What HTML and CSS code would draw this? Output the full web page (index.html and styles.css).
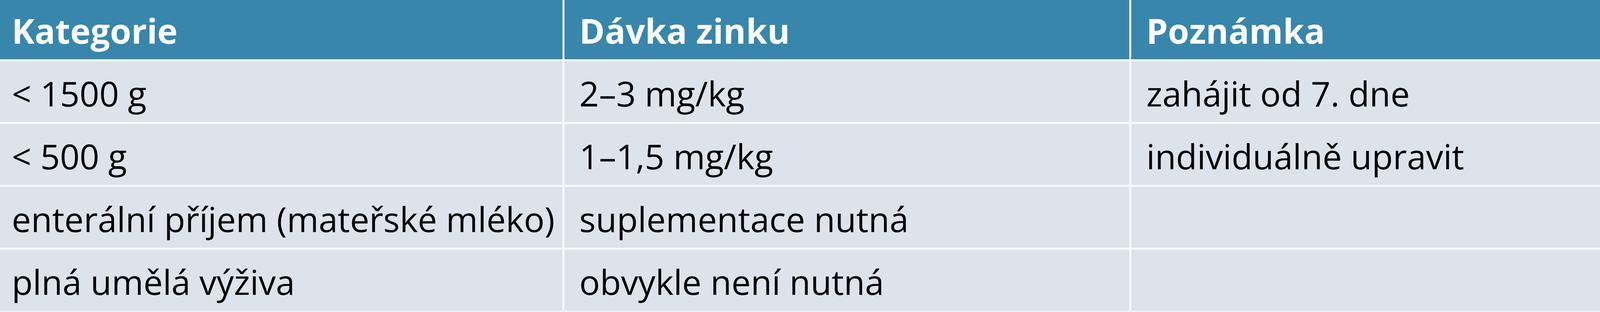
FILE: index.html
```html
<!DOCTYPE html>
<html lang="cs">
<head>
<meta charset="utf-8">
<title>Dávka zinku</title>
<link rel="stylesheet" href="styles.css">
</head>
<body>
<div class="table">
  <div class="cell head c1">Kategorie</div>
  <div class="cell head c2">Dávka zinku</div>
  <div class="cell head c3">Poznámka</div>

  <div class="cell c1">&lt; 1500 g</div>
  <div class="cell c2">2–3 mg/kg</div>
  <div class="cell c3">zahájit od 7. dne</div>

  <div class="cell c1">&lt; 500 g</div>
  <div class="cell c2">1–1,5 mg/kg</div>
  <div class="cell c3">individuálně upravit</div>

  <div class="cell c1">enterální příjem (mateřské mléko)</div>
  <div class="cell c2">suplementace nutná</div>
  <div class="cell c3"></div>

  <div class="cell c1">plná umělá výživa</div>
  <div class="cell c2">obvykle není nutná</div>
  <div class="cell c3"></div>
</div>
</body>
</html>
```

FILE: styles.css
```css
html, body {
  margin: 0;
  padding: 0;
}

body {
  background: #eef1f5;
  font-family: "Open Sans", "Noto Sans", sans-serif;
  overflow: hidden;
}

.table {
  display: grid;
  grid-template-columns: 1850fr 1858fr 1541fr;
  grid-template-rows: 152px 156px 156px 156px 156px;
  column-gap: 5px;
  row-gap: 5px;
  width: 100%;
  background: #f7faff;
}

.cell {
  display: flex;
  align-items: center;
  box-sizing: border-box;
  min-width: 0;
  padding-top: 8px;
  padding-left: 38px;
  font-size: 88px;
  line-height: 88px;
  color: #000;
  background: #dde3eb;
  white-space: nowrap;
}

.cell.c1 {
  padding-left: 30px;
}

.cell.head {
  padding-top: 4px;
  background: #3886ab;
  color: #fff;
  font-weight: 700;
}
```
